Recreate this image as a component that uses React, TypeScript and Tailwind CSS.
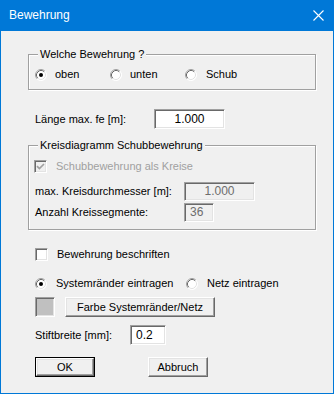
import React from "react";

// ─── Win classic bits ─────────────────────────────────────────────────────────
const sunken =
  "border border-t-[#a0a0a0] border-l-[#a0a0a0] border-r-white border-b-white shadow-[inset_1px_1px_0_#696969,inset_-1px_-1px_0_#e3e3e3]";
const raised =
  "border border-t-white border-l-white border-r-[#696969] border-b-[#696969] shadow-[inset_-1px_-1px_0_#a0a0a0,inset_1px_1px_0_#e3e3e3] bg-[#f0f0f0]";

function Radio({ checked = false }: { checked?: boolean }) {
  return (
    <svg width="12" height="12" viewBox="0 0 12 12" className="shrink-0">
      <circle cx="6" cy="6" r="5.5" fill="white" />
      <path d="M2.11 9.89 A5.5 5.5 0 0 1 9.89 2.11" stroke="#a0a0a0" fill="none" />
      <path d="M9.89 2.11 A5.5 5.5 0 0 1 2.11 9.89" stroke="#ffffff" fill="none" />
      <path d="M2.82 9.18 A4.5 4.5 0 0 1 9.18 2.82" stroke="#696969" fill="none" />
      <path d="M9.18 2.82 A4.5 4.5 0 0 1 2.82 9.18" stroke="#e3e3e3" fill="none" />
      {checked && <circle cx="6" cy="6" r="2" fill="black" />}
    </svg>
  );
}

function Check({ checked = false, disabled = false }: { checked?: boolean; disabled?: boolean }) {
  return (
    <div
      className={`w-[13px] h-[13px] shrink-0 flex items-center justify-center ${sunken} ${
        disabled ? "bg-[#f0f0f0]" : "bg-white"
      }`}
    >
      {checked && (
        <svg width="9" height="9" viewBox="0 0 9 9">
          <path
            d="M1 4.2 L3.4 6.6 L8 2"
            stroke={disabled ? "#a0a0a0" : "black"}
            strokeWidth="1.7"
            fill="none"
          />
        </svg>
      )}
    </div>
  );
}

function Field({
  value,
  w,
  h = "h-[20px]",
  disabled = false,
  align = "center",
}: {
  value: string;
  w: string;
  h?: string;
  disabled?: boolean;
  align?: "center" | "left";
}) {
  return (
    <div
      className={`${w} ${h} ${sunken} flex items-center ${
        align === "center" ? "justify-center" : "pl-[5px]"
      } ${disabled ? "bg-[#f0f0f0] text-[#6d6d6d]" : "bg-white text-black"} text-[12px]`}
    >
      {value}
    </div>
  );
}

function GroupBox({ title, children, className = "" }: { title: string; children: React.ReactNode; className?: string }) {
  return (
    <fieldset
      className={`w-[288px] border border-[#a0a0a0] shadow-[1px_1px_0_white,inset_1px_1px_0_white] ${className}`}
    >
      <legend className="ml-[9px] px-[2px] h-[13px] leading-[13px] bg-[#f0f0f0] text-[11px]">
        {title}
      </legend>
      {children}
    </fieldset>
  );
}

// ─── Dialog ───────────────────────────────────────────────────────────────────
export default function App() {
  return (
    <div
      className="w-[334px] h-[394px] bg-[#0078d7] flex flex-col text-black text-[11px] leading-[13px]"
      style={{ fontFamily: '"Liberation Sans", Arial, sans-serif' }}
    >
      {/* title bar */}
      <div className="h-[31px] shrink-0 flex items-center justify-between pl-[9px] pr-[10px] text-white">
        <span className="text-[12px]">Bewehrung</span>
        <svg width="11" height="11" viewBox="0 0 11 11">
          <path d="M0.5 0.5 L10.5 10.5 M10.5 0.5 L0.5 10.5" stroke="white" strokeWidth="1.1" />
        </svg>
      </div>

      {/* body */}
      <div className="flex-1 mx-[1px] mb-[1px] bg-[#f0f0f0] pl-[27px] pt-[17px] flex flex-col">
        <GroupBox title="Welche Bewehrung ?" className="pb-[8px]">
          <div className="mt-[7px] h-[13px] flex items-center pl-[6px]">
            <div className="w-[75px] flex items-center gap-[8px]">
              <Radio checked />
              <span>oben</span>
            </div>
            <div className="w-[75px] flex items-center gap-[8px]">
              <Radio />
              <span>unten</span>
            </div>
            <div className="flex items-center gap-[9px]">
              <Radio />
              <span>Schub</span>
            </div>
          </div>
        </GroupBox>

        <div className="mt-[19px] flex items-center h-[20px] pl-[7px]">
          <span className="w-[119px]">Länge max. fe [m]:</span>
          <Field value="1.000" w="w-[71px]" />
        </div>

        <GroupBox title="Kreisdiagramm Schubbewehrung" className="mt-[10px] pb-[7px]">
          <div className="mt-[8px] h-[13px] flex items-center pl-[5px] gap-[9px] text-[#a0a0a0]">
            <Check checked disabled />
            <span>Schubbewehrung als Kreise</span>
          </div>
          <div className="mt-[9px] h-[19px] flex items-center pl-[6px]">
            <span className="w-[149px]">max. Kreisdurchmesser [m]:</span>
            <Field value="1.000" w="w-[71px]" h="h-[19px]" disabled />
          </div>
          <div className="mt-[2px] h-[19px] flex items-center pl-[6px]">
            <span className="w-[149px]">Anzahl Kreissegmente:</span>
            <Field value="36" w="w-[30px]" h="h-[19px]" disabled align="left" />
          </div>
        </GroupBox>

        <div className="mt-[18px] h-[13px] flex items-center pl-[7px] gap-[9px]">
          <Check />
          <span>Bewehrung beschriften</span>
        </div>

        <div className="mt-[16px] h-[13px] flex items-center pl-[7px]">
          <div className="w-[151px] flex items-center gap-[9px]">
            <Radio checked />
            <span>Systemränder eintragen</span>
          </div>
          <div className="flex items-center gap-[9px]">
            <Radio />
            <span>Netz eintragen</span>
          </div>
        </div>

        <div className="mt-[7px] h-[20px] flex items-center pl-[7px] gap-[10px]">
          <div className={`w-[20px] h-[20px] ${sunken} bg-[#c0c0c0]`} />
          <button className={`w-[150px] h-[20px] ${raised} flex items-center justify-center`}>
            Farbe Systemränder/Netz
          </button>
        </div>

        <div className="mt-[8px] h-[20px] flex items-center pl-[7px]">
          <span className="w-[95px]">Stiftbreite [mm]:</span>
          <Field value="0.2" w="w-[36px]" align="left" />
        </div>

        <div className="mt-[12px] h-[20px] flex items-center pl-[7px] gap-[53px]">
          <div className="w-[60px] h-[20px] border border-black">
            <button className={`w-full h-full ${raised} flex items-center justify-center`}>OK</button>
          </div>
          <button className={`w-[60px] h-[20px] ${raised} flex items-center justify-center`}>
            Abbruch
          </button>
        </div>
      </div>
    </div>
  );
}
